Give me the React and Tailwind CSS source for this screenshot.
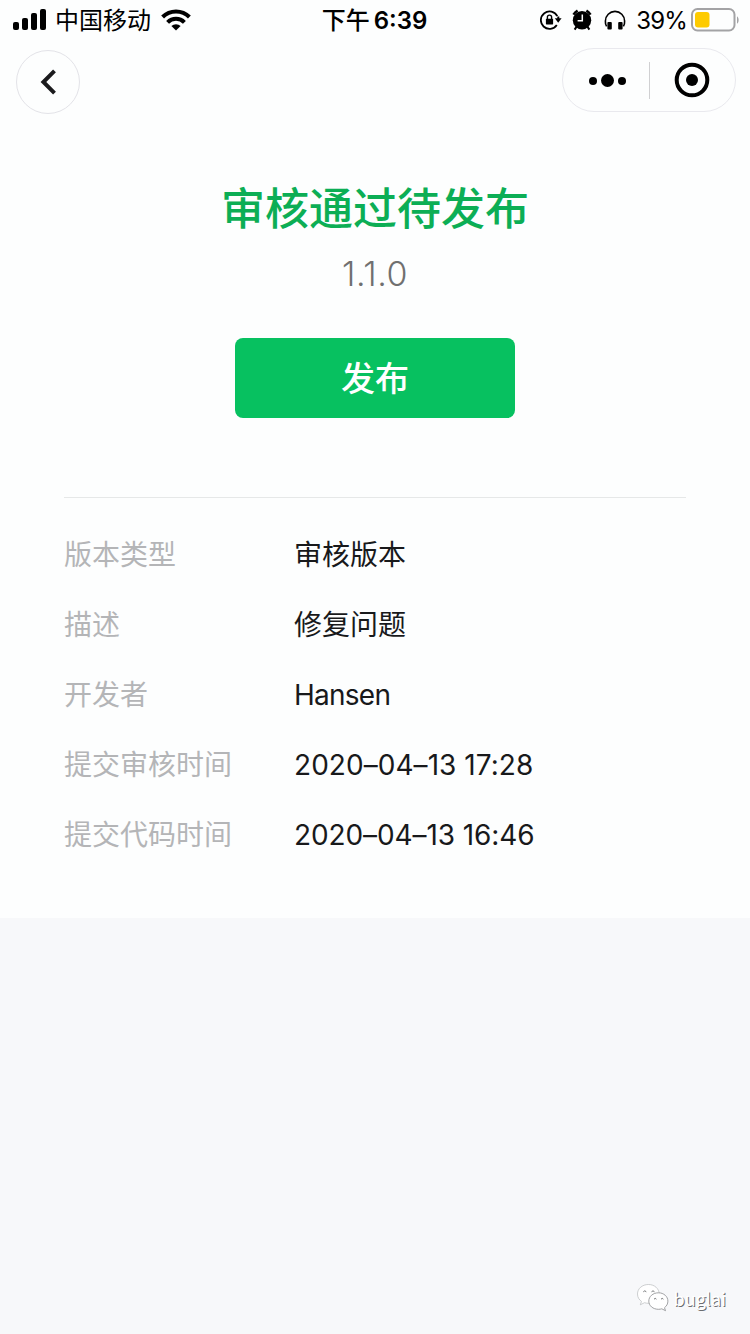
const details = [
  { label: '版本类型', value: '审核版本' },
  { label: '描述', value: '修复问题' },
  { label: '开发者', value: 'Hansen', spacing: 'tracking-[-0.75px]' },
  { label: '提交审核时间', value: '2020–04–13 17:28', spacing: 'tracking-[0.05px]' },
  { label: '提交代码时间', value: '2020–04–13 16:46', spacing: 'tracking-[-0.1px]' },
]

const SignalIcon = () => (
  <svg width="34" height="22" viewBox="0 0 34 22" className="shrink-0">
    <rect x="0" y="13" width="6" height="8" rx="2" />
    <rect x="9" y="9" width="6" height="12" rx="2" />
    <rect x="18" y="4" width="6" height="17" rx="2" />
    <rect x="27" y="0" width="6" height="21" rx="2" />
  </svg>
)

const WifiIcon = () => (
  <svg width="30" height="22" viewBox="0 0 30 22" fill="none" stroke="#000" strokeWidth="4" className="shrink-0">
    <path d="M1.6 8a18.8 18.8 0 0 1 26.8 0" />
    <path d="M6.6 13.4a11.7 11.7 0 0 1 16.8 0" />
    <path d="M15 21.6l-4.6-4.6a6.6 6.6 0 0 1 9.2 0z" fill="#000" stroke="none" />
  </svg>
)

const RotationLockIcon = () => (
  <svg width="22" height="20" viewBox="0 0 22 20" fill="none" stroke="#000" className="shrink-0">
    <path d="M17.3 6.2A8.7 8.7 0 1 0 16.8 15" strokeWidth="1.8" />
    <path d="M18.3 6.5v3" strokeWidth="2" />
    <path d="M14.8 8.2h6.8l-3.4 4.6z" fill="#000" stroke="none" />
    <rect x="5.9" y="8.8" width="7.2" height="5.6" rx="0.6" fill="#000" stroke="none" />
    <path d="M7.4 9V7.2a2.1 2.1 0 0 1 4.2 0V9" strokeWidth="1.4" />
  </svg>
)

const AlarmIcon = () => (
  <svg width="20" height="22" viewBox="0 0 20 22" fill="none" className="shrink-0">
    <circle cx="10" cy="11.2" r="9.2" fill="#000" />
    <path d="M1.4 5.6A13 13 0 0 1 5.6 1.6M18.6 5.6A13 13 0 0 0 14.4 1.6" stroke="#000" strokeWidth="2.4" />
    <path d="M4.6 17.6l-2 3M15.4 17.6l2 3" stroke="#000" strokeWidth="2" />
    <path d="M10.3 5.6v6.2H5.6" stroke="#fff" strokeWidth="1.5" />
  </svg>
)

const HeadphonesIcon = () => (
  <svg width="22" height="20" viewBox="0 0 22 20" fill="none" className="shrink-0">
    <path d="M2.6 16.4A9.4 9.4 0 0 1 1.4 11a9.6 9.6 0 0 1 19.2 0 9.4 9.4 0 0 1-1.2 5.4" stroke="#000" strokeWidth="1.6" />
    <rect x="3.4" y="12" width="4.4" height="7.4" rx="1" fill="#000" />
    <rect x="14.2" y="12" width="4.4" height="7.4" rx="1" fill="#000" />
  </svg>
)

const BatteryIcon = () => (
  <svg width="48" height="24" viewBox="0 0 48 24" className="shrink-0">
    <rect x="1" y="1" width="42.5" height="21.5" rx="5.5" fill="none" stroke="#a3a3a5" strokeWidth="2" />
    <rect x="4" y="4" width="14.5" height="15.5" rx="3" fill="#fecb00" />
    <path d="M46 8.2c2.2 1.6 2.2 6 0 7.6z" fill="#a3a3a5" />
  </svg>
)

const WechatIcon = () => (
  <svg width="34" height="30" viewBox="0 0 34 30" fill="#fff" className="shrink-0">
    <path stroke="#b9bbbd" strokeWidth="0.7" d="M12.5 1.5C6.2 1.5 1.5 5.6 1.5 11c0 3.2 1.5 5.7 4 7.4l-1.2 3.4 4.2-2.1c1.3.4 2.6.6 4 .6 6 0 10.7-4 10.7-9.3S18.5 1.5 12.5 1.5z" />
    <path stroke="#8a8c8e" strokeWidth="0.8" d="M22.5 9.8c-5.6 0-9.7 3.7-9.7 8.3s4.1 8.2 9.7 8.2c1.2 0 2.3-.2 3.3-.5l3.7 1.9-1-3c2.1-1.6 3.4-3.9 3.4-6.6 0-4.6-4.2-8.3-9.4-8.3z" />
    <path d="M7.3 8.8q1.5-2 3 0M15.5 8.8q1.5-2 3 0M18 16.2q1.2-1.7 2.4 0M25 16.2q1.2-1.7 2.4 0" fill="none" stroke="#77797b" strokeWidth="1" />
  </svg>
)

const StatusBar = () => (
  <header className="grid h-10 grid-cols-3 items-center whitespace-nowrap pl-[13px] text-black">
    <div className="flex items-center">
      <SignalIcon />
      <span className="ml-2 pt-0.5 text-2xl leading-[38px]">中国移动</span>
      <span className="ml-[10px]"><WifiIcon /></span>
    </div>
    <div className="flex items-center justify-center pr-[14px] pt-0.5 text-2xl font-medium leading-[38px]">
      <span>下午</span>
      <span className="ml-1 font-semibold">6:39</span>
    </div>
    <div className="flex items-center justify-end pr-[11px]">
      <RotationLockIcon />
      <span className="ml-[10px]"><AlarmIcon /></span>
      <span className="ml-3"><HeadphonesIcon /></span>
      <span className="ml-[10px] mr-1 pt-0.5 text-2xl leading-[38px] tracking-[-0.8px]">39%</span>
      <BatteryIcon />
    </div>
  </header>
)

const NavBar = () => (
  <nav className="flex h-[88px] items-start justify-between pl-4 pr-[14px] pt-2">
    <button className="mt-[2px] flex size-16 items-center justify-center rounded-full border border-[#e3e3e8]">
      <svg width="18" height="28" viewBox="0 0 18 28" fill="none" stroke="#1b1b1d" strokeWidth="4">
        <path d="M15.5 2.8L4.4 14l11.1 11.2" />
      </svg>
    </button>
    <div className="flex h-16 w-[174px] items-center rounded-full border border-[#e9e9ee]">
      <button className="flex flex-1 items-center justify-center">
        <svg width="38" height="16" viewBox="0 0 38 16" className="ml-[5px] mt-0.5">
          <circle cx="4" cy="8" r="4" />
          <circle cx="18.5" cy="7.5" r="6.5" />
          <circle cx="33" cy="8" r="4" />
        </svg>
      </button>
      <span className="h-[37px] w-px bg-[#d0d0d2]" />
      <button className="flex flex-1 items-center justify-center">
        <svg width="36" height="36" viewBox="0 0 36 36">
          <circle cx="18" cy="18" r="15.3" fill="none" stroke="#000" strokeWidth="4" />
          <circle cx="18" cy="18" r="6" />
        </svg>
      </button>
    </div>
  </nav>
)

const App = () => {
  return (
    <div className="flex h-[1334px] w-[750px] flex-col overflow-hidden bg-[#f7f8fa] font-['Inter','Noto_Sans_CJK_SC',sans-serif]">
      <div className="h-[918px] bg-[#fdfefe]">
        <StatusBar />
        <NavBar />

        <section className="flex flex-col items-center pt-[49px]">
          <h1 className="text-[44px] font-medium leading-[64px] text-[#0cae55]">审核通过待发布</h1>
          <p className="mt-[9px] text-[34px] font-light leading-[48px] tracking-[0.6px] text-[#707070]">1.1.0</p>
          <button className="mt-10 h-20 w-[280px] rounded-lg bg-[#07c160] text-[34px] font-medium text-white">
            发布
          </button>
        </section>

        <dl className="mx-16 mt-[79px] border-t border-[#e6e8e8] pt-[22px] text-[28px] leading-[70px]">
          {details.map(({ label, value, spacing }) => (
            <div key={label} className="flex h-[70px]">
              <dt className="w-[230px] text-[#b4b5b7]">{label}</dt>
              <dd className={`whitespace-nowrap text-[#18191b] ${spacing || ''}`}>{value}</dd>
            </div>
          ))}
        </dl>
      </div>

      <footer className="mt-auto flex items-center justify-end pb-5 pr-6">
        <WechatIcon />
        <span className="ml-1 font-['Noto_Sans_CJK_SC',sans-serif] text-[18px] leading-8 text-white [text-shadow:1px_1px_0_#6b6d70]">buglai</span>
      </footer>
    </div>
  )
}

export default App
